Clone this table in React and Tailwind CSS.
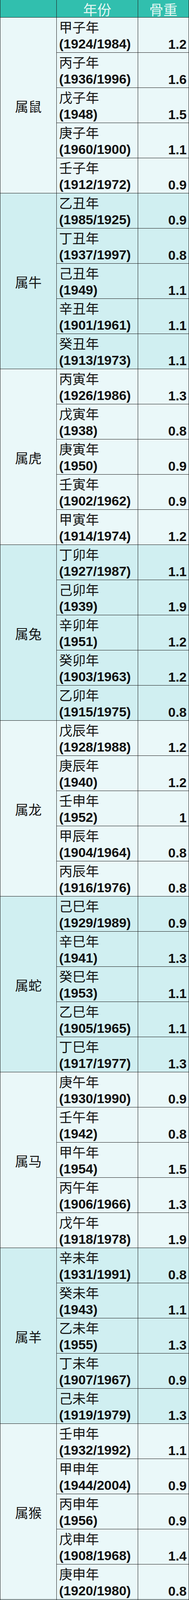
const zodiacs = [
  {
    name: "属鼠",
    rows: [
      ["甲子年", "(1924/1984)", "1.2"],
      ["丙子年", "(1936/1996)", "1.6"],
      ["戊子年", "(1948)", "1.5"],
      ["庚子年", "(1960/1900)", "1.1"],
      ["壬子年", "(1912/1972)", "0.9"],
    ],
  },
  {
    name: "属牛",
    rows: [
      ["乙丑年", "(1985/1925)", "0.9"],
      ["丁丑年", "(1937/1997)", "0.8"],
      ["己丑年", "(1949)", "1.1"],
      ["辛丑年", "(1901/1961)", "1.1"],
      ["癸丑年", "(1913/1973)", "1.1"],
    ],
  },
  {
    name: "属虎",
    rows: [
      ["丙寅年", "(1926/1986)", "1.3"],
      ["戊寅年", "(1938)", "0.8"],
      ["庚寅年", "(1950)", "0.9"],
      ["壬寅年", "(1902/1962)", "0.9"],
      ["甲寅年", "(1914/1974)", "1.2"],
    ],
  },
  {
    name: "属兔",
    rows: [
      ["丁卯年", "(1927/1987)", "1.1"],
      ["己卯年", "(1939)", "1.9"],
      ["辛卯年", "(1951)", "1.2"],
      ["癸卯年", "(1903/1963)", "1.2"],
      ["乙卯年", "(1915/1975)", "0.8"],
    ],
  },
  {
    name: "属龙",
    rows: [
      ["戊辰年", "(1928/1988)", "1.2"],
      ["庚辰年", "(1940)", "1.2"],
      ["壬申年", "(1952)", "1"],
      ["甲辰年", "(1904/1964)", "0.8"],
      ["丙辰年", "(1916/1976)", "0.8"],
    ],
  },
  {
    name: "属蛇",
    rows: [
      ["己巳年", "(1929/1989)", "0.9"],
      ["辛巳年", "(1941)", "1.3"],
      ["癸巳年", "(1953)", "1.1"],
      ["乙巳年", "(1905/1965)", "1.1"],
      ["丁巳年", "(1917/1977)", "1.3"],
    ],
  },
  {
    name: "属马",
    rows: [
      ["庚午年", "(1930/1990)", "0.9"],
      ["壬午年", "(1942)", "0.8"],
      ["甲午年", "(1954)", "1.5"],
      ["丙午年", "(1906/1966)", "1.3"],
      ["戊午年", "(1918/1978)", "1.9"],
    ],
  },
  {
    name: "属羊",
    rows: [
      ["辛未年", "(1931/1991)", "0.8"],
      ["癸未年", "(1943)", "1.1"],
      ["乙未年", "(1955)", "1.3"],
      ["丁未年", "(1907/1967)", "0.9"],
      ["己未年", "(1919/1979)", "1.3"],
    ],
  },
  {
    name: "属猴",
    rows: [
      ["壬申年", "(1932/1992)", "1.1"],
      ["甲申年", "(1944/2004)", "0.9"],
      ["丙申年", "(1956)", "0.9"],
      ["戊申年", "(1908/1968)", "1.4"],
      ["庚申年", "(1920/1980)", "0.8"],
    ],
  },
  {
    name: "属鸡",
    rows: [
      ["癸酉年", "(1933/1993)", "0.8"],
      ["乙酉年", "(1945)", "1.5"],
      ["丁酉年", "(1957)", "1.4"],
      ["己酉年", "(1909/1969)", "0.9"],
      ["辛酉年", "(1921/1981)", "1.6"],
    ],
  },
  {
    name: "属狗",
    rows: [
      ["甲戌年", "(1934/1994)", "1.5"],
      ["丙戌年", "(1946)", "1.3"],
      ["戊戌年", "(1898/1958)", "1.4"],
      ["庚戌年", "(1910/1970)", "0.9"],
      ["壬戌年", "(1922/1982)", "1"],
    ],
  },
  {
    name: "属猪",
    rows: [
      ["乙亥年", "(1935/1995)", "0.9"],
      ["丁亥年", "(1947)", "1.6"],
      ["己亥年", "(1899/1959)", "0.9"],
      ["辛亥年", "(1911/1971)", "1.7"],
      ["癸亥年", "(1923/1983)", "1.3"],
    ],
  },
];

const cjk = "font-['Noto_Sans_CJK_SC',sans-serif]";
const num = "font-['Liberation_Sans',Arial,sans-serif] font-bold";

function Group({ group, index }) {
  // groups alternate between a pale and a slightly deeper cyan
  const bg = index % 2 === 0 ? "bg-[#eaf8f9]" : "bg-[#d0eff1]";

  return (
    <div className={`flex h-[450px] overflow-hidden ${bg}`}>
      <div
        className={`flex w-[144px] shrink-0 items-center justify-center border-r border-b border-[#1c1c1c] pt-[4px] text-[34px] leading-[44px] text-[#111] ${cjk}`}
      >
        {group.name}
      </div>
      <div className="flex w-[338px] shrink-0 flex-col">
        {group.rows.map(([ganzhi, years, weight]) => (
          <div key={ganzhi + years} className="flex h-[90px] shrink-0 overflow-hidden">
            <div className="w-[208px] shrink-0 border-r border-b border-[#1c1c1c] pt-[2px] pl-[6px] text-[#111]">
              <div className={`text-[34px] leading-[44px] whitespace-nowrap ${cjk}`}>{ganzhi}</div>
              <div className={`text-[34px] leading-[43px] whitespace-nowrap ${num}`}>{years}</div>
            </div>
            <div
              className={`flex w-[130px] shrink-0 items-end justify-end border-r border-b border-[#1c1c1c] pr-[5px] text-[34px] leading-[42px] text-[#111] ${num}`}
            >
              {weight}
            </div>
          </div>
        ))}
      </div>
    </div>
  );
}

function App() {
  return (
    <div className="relative w-[483px] border-l border-[#1c1c1c] bg-white">
      <div className={`flex h-[45px] overflow-hidden bg-[#31bfae] text-[#e4f7f3] ${cjk}`}>
        <div className="w-[144px] shrink-0 border-r border-b border-[#1c1c1c]"></div>
        <div className="w-[208px] shrink-0 border-r border-b border-[#1c1c1c] pt-[3px] text-center text-[36px] leading-[41px]">
          年份
        </div>
        <div className="w-[130px] shrink-0 border-r border-b border-[#1c1c1c] pt-[3px] text-center text-[36px] leading-[41px]">
          骨重
        </div>
      </div>

      {zodiacs.map((group, i) => (
        <Group key={group.name} group={group} index={i} />
      ))}

      {/* watermark in the bottom right corner */}
      <div className={`absolute right-[8px] bottom-[10px] flex items-center gap-[6px] text-[16px] leading-[20px] text-white/85 ${cjk} [text-shadow:0_0_2px_rgba(0,0,0,0.7)]`}>
        <span className="inline-block h-[12px] w-[12px] rounded-full border-2 border-white/80 bg-gray-500/60"></span>
        <span>@海亮日加油站土豆</span>
      </div>
    </div>
  );
}

export default App;
